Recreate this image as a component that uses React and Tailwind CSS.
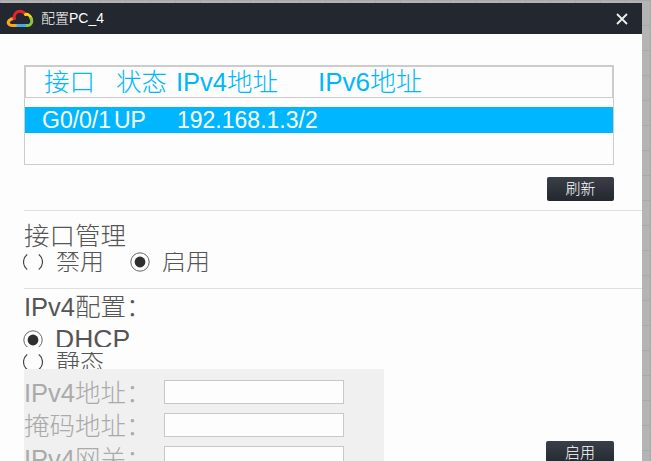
import React from 'react';

const font = "font-['Liberation_Sans','Noto_Sans_CJK_SC',sans-serif] font-light";

const CloudLogo = () => (
  <svg width="28" height="20" viewBox="0 0 28 20" fill="none" strokeWidth="3" strokeLinecap="round">
    <path d="M3.2 11.5 C5 9.5 7 9.5 8 9.5" stroke="#f5a623" />
    <path d="M8 9.5 C8 5 10.5 2.2 14 2.2 C16.5 2.2 18.4 3.6 19.6 5.4" stroke="#e8232a" />
    <path d="M19.6 5.4 C22 5 24.5 7 25.2 9.6" stroke="#f7d417" />
    <path d="M25.2 9.6 C26.6 12.5 25.4 16.2 22 16.6 L19 16.6" stroke="#8cc63f" />
    <path d="M18.5 16.6 L10 16.6" stroke="#3fa9f5" />
    <path d="M9.5 16.6 L6 16.6 C2.6 16.4 1.2 13.6 3.2 11.5" stroke="#f7a823" />
  </svg>
);

const Radio = ({ checked }) => (
  <svg width="20" height="20" viewBox="0 0 20 20" fill="none" className="shrink-0">
    {checked ? (
      <>
        <circle cx="10" cy="10" r="9.2" stroke="#666" strokeWidth="1" />
        <circle cx="10" cy="10" r="5.4" fill="#2f2f2f" />
      </>
    ) : (
      <>
        <path d="M4.2 2.5 A9.5 9.5 0 0 0 4.2 17.5" stroke="#444" strokeWidth="1.2" />
        <path d="M15.8 2.5 A9.5 9.5 0 0 1 15.8 17.5" stroke="#444" strokeWidth="1.2" />
      </>
    )}
  </svg>
);

const DarkButton = ({ children, className }) => (
  <button className={`w-[67px] rounded-[2px] bg-gradient-to-b from-[#3a3f49] to-[#23272f] text-[15px] text-white ${className}`}>
    {children}
  </button>
);

const Field = ({ label }) => (
  <div className="flex h-[33px] items-start">
    <span className="w-[140px] text-[25.5px] leading-[26px] text-[#aaaaaa]">{label}</span>
    <input className="h-[24px] w-[180px] border border-[#c8c8c8] bg-[#fdfdfd]" />
  </div>
);

export default function App() {
  return (
    <div className={`${font} h-[461px] w-[651px] overflow-hidden bg-[#b4b4b4] bg-[linear-gradient(#a9a9a9_1px,transparent_1px),linear-gradient(90deg,#a9a9a9_1px,transparent_1px)] bg-[size:25px_25px] pt-[3px] pr-[9px]`}>
      <div className="h-[458px] overflow-hidden bg-[#fdfdfd]">
        {/* Title bar */}
        <div className="flex h-[31px] items-center bg-[#23272f] pr-[14px] pl-[6px]">
          <CloudLogo />
          <span className="ml-[7px] text-[14px] text-white">配置PC_4</span>
          <svg width="12" height="12" viewBox="0 0 12 12" className="ml-auto" stroke="#eeeeee" strokeWidth="1.8">
            <path d="M1 1 L11 11 M11 1 L1 11" />
          </svg>
        </div>

        <div className="pt-[31px]">
          {/* Interface table */}
          <div className="mx-[24px] h-[100px] w-[590px] border border-[#cccccc]">
            <div className="flex h-[32px] items-center border border-b-[1px] border-[#cccccc] pl-[18px] text-[25.5px] leading-[28px] text-[#00b7ff]">
              <span className="w-[72px]">接口</span>
              <span className="w-[60px]">状态</span>
              <span className="w-[142px]">IPv4地址</span>
              <span className="text-[26px]">IPv6地址</span>
            </div>
            <div className="mt-[9px] flex h-[26px] items-center bg-[#00b7ff] pl-[17px] text-[23px] leading-[26px] text-white">
              <span className="w-[72px]">G0/0/1</span>
              <span className="w-[63px]">UP</span>
              <span>192.168.1.3/2</span>
            </div>
          </div>

          <div className="mt-[12px] flex justify-end pr-[28px]">
            <DarkButton className="h-[24px]">刷新</DarkButton>
          </div>
          <div className="mt-[9px] ml-[24px] h-px bg-[#e0e0e0]" />

          {/* Interface management */}
          <div className="mt-[11px] pl-[24px] text-[25.5px] leading-[28px] text-[#555555]">接口管理</div>
          <div className="mt-[2px] flex h-[20px] items-center overflow-hidden pl-[23px] text-[24px] leading-[30px] text-[#555555]">
            <Radio />
            <span className="ml-[13px]">禁用</span>
            <span className="ml-[26px] flex items-center">
              <Radio checked />
            </span>
            <span className="ml-[12px]">启用</span>
          </div>
          <div className="mt-[16px] ml-[24px] h-px bg-[#e0e0e0]" />

          {/* IPv4 config */}
          <div className="mt-[4px] pl-[24px] text-[25.5px] leading-[28px] text-[#555555]">IPv4配置：</div>
          <div className="mt-[9px] flex h-[17px] items-start overflow-hidden pl-[23px] text-[26.5px] leading-[19px] text-[#555555]">
            <Radio checked />
            <span className="ml-[12px]">DHCP</span>
          </div>
          <div className="mt-[5px] flex h-[17px] items-start overflow-hidden pl-[23px] text-[24px] leading-[20px] text-[#555555]">
            <Radio />
            <span className="ml-[13px]">静态</span>
          </div>

          {/* Static address panel + apply button */}
          <div className="flex items-start">
            <div className="ml-[24px] h-[92px] w-[360px] overflow-hidden bg-[#f0f0f0] pt-[11px]">
              <Field label="IPv4地址：" />
              <Field label="掩码地址：" />
              <Field label="IPv4网关：" />
            </div>
            <DarkButton className="mt-[72px] ml-[162px] h-[24px] w-[68px]">启用</DarkButton>
          </div>
        </div>
      </div>
    </div>
  );
}
